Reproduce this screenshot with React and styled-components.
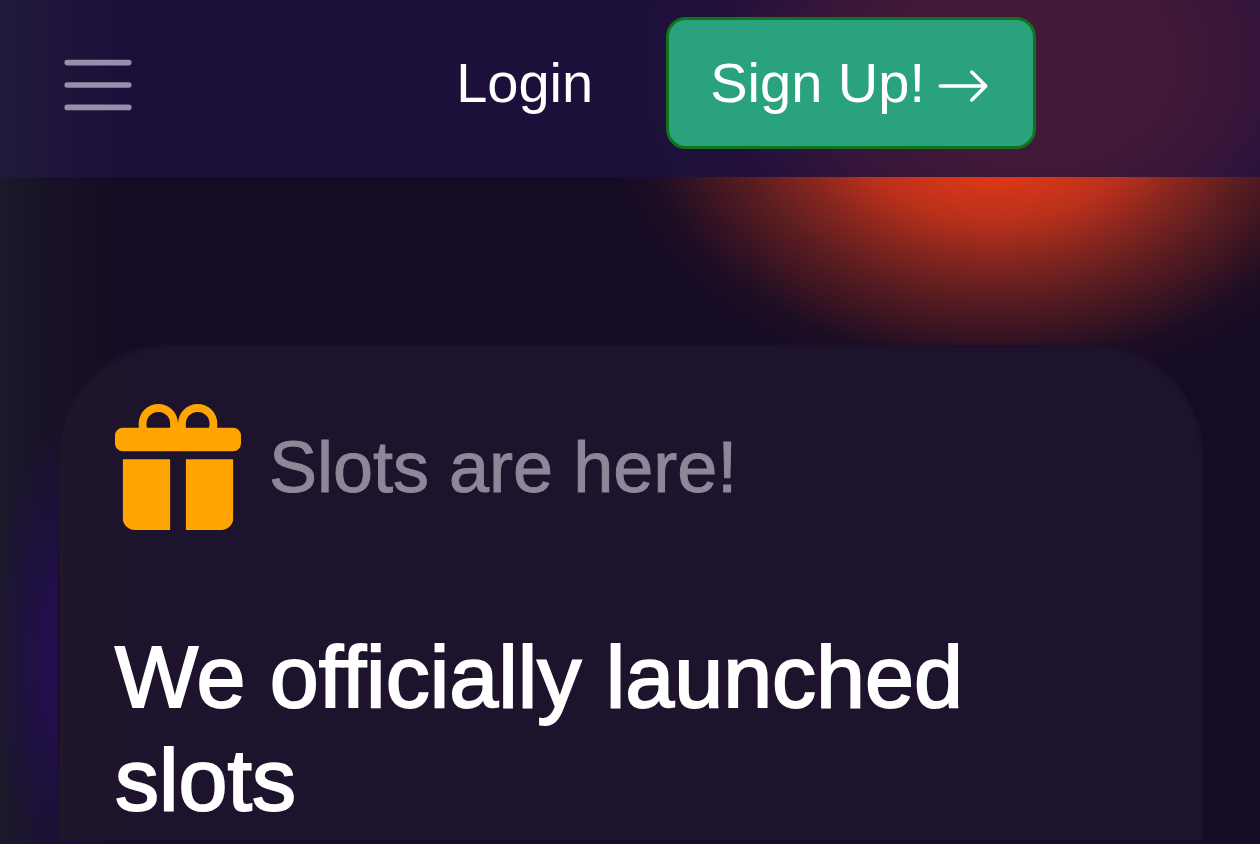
import React from "react";
import styled, { createGlobalStyle } from "styled-components";
import { BsArrowRight, BsGiftFill } from "react-icons/bs";

const GlobalStyle = createGlobalStyle`
  *, *::before, *::after { box-sizing: border-box; }
  html { background: #150b24; }
  body {
    margin: 0;
    font-family: "Liberation Sans", Arial, sans-serif;
    color: #fff;
  }
  h1, h2, p { margin: 0; }
`;

const Page = styled.div`
  min-height: 100vh;
  overflow: hidden;
  display: flex;
  flex-direction: column;
  background:
    radial-gradient(ellipse 85px 250px at 74px 660px, rgba(42, 14, 104, 0.85), rgba(38, 14, 94, 0.55) 45%, transparent),
    radial-gradient(
      ellipse 400px 290px at 79% 106px,
      #dc3716 0%,
      #d83718 26%,
      #b8301b 40%,
      #86261e 53%,
      #581c20 67%,
      #351322 80%,
      rgba(34, 15, 36, 0.6) 89%,
      transparent 100%
    ),
    linear-gradient(90deg, #1c192b 0, #181227 45px, #150b24 130px);
`;

const Header = styled.header`
  display: flex;
  align-items: center;
  min-height: 177px;
  padding: 0 224px 12px 56px;
  background:
    radial-gradient(ellipse 400px 300px at 82% 60px, #451938 0%, #411838 35%, rgba(58, 22, 58, 0.85) 56%, rgba(44, 18, 60, 0.5) 76%, transparent 100%),
    linear-gradient(90deg, #221b3d 0, #1f163b 50px, #1c103a 120px);
`;

const MenuButton = styled.button`
  display: flex;
  margin: 4px auto 0 0;
  padding: 0;
  border: 0;
  background: none;
  color: #988fac;
`;

const Actions = styled.nav`
  display: flex;
  align-items: center;
  gap: 73px;
  font-size: 56px;
  line-height: 64px;
`;

const LoginLink = styled.a`
  color: inherit;
  text-decoration: none;
`;

const SignUpButton = styled.button`
  display: flex;
  align-items: center;
  gap: 10px;
  height: 132px;
  padding: 0 42px 0 41px;
  border: 3px solid #0e751c;
  border-radius: 20px;
  background: #29a27d;
  color: #fff;
  font: inherit;
  white-space: nowrap;

  svg {
    margin-top: 6px;
  }
`;

const Main = styled.main`
  flex: 1;
  display: flex;
  padding: 168px 57px 4px;
`;

const Card = styled.article`
  flex: 1;
  padding: 56px 55px 0;
  border: 3px solid #1b1229;
  border-bottom: 0;
  border-radius: 110px 110px 0 0;
  background: linear-gradient(90deg, #1f162b, #1d132c 80px) padding-box;
`;

const Eyebrow = styled.div`
  display: flex;
  align-items: center;
  gap: 28px;
  color: #8e8799;
`;

const EyebrowText = styled.p`
  font-size: 72px;
  line-height: 80px;
  -webkit-text-stroke: 1px currentColor;
`;

const Title = styled.h1`
  margin-top: 95px;
  font-size: 88px;
  font-weight: 400;
  line-height: 103px;
  -webkit-text-stroke: 2px currentColor;
`;

const MenuIcon = () => (
  <svg width="84" height="84" viewBox="0 0 30 30" aria-hidden="true">
    <path d="M4 7h22M4 15h22M4 23h22" stroke="currentColor" strokeWidth="2" strokeLinecap="round" />
  </svg>
);

export default function App() {
  return (
    <>
      <GlobalStyle />
      <Page>
        <Header>
          <MenuButton type="button" aria-label="Open menu">
            <MenuIcon />
          </MenuButton>
          <Actions>
            <LoginLink href="#login">Login</LoginLink>
            <SignUpButton type="button">
              Sign Up!
              <BsArrowRight size={56} aria-hidden="true" />
            </SignUpButton>
          </Actions>
        </Header>
        <Main>
          <Card>
            <Eyebrow>
              <BsGiftFill size={126} color="#ffa502" aria-hidden="true" />
              <EyebrowText>Slots are here!</EyebrowText>
            </Eyebrow>
            <Title>We officially launched slots</Title>
          </Card>
        </Main>
      </Page>
    </>
  );
}
